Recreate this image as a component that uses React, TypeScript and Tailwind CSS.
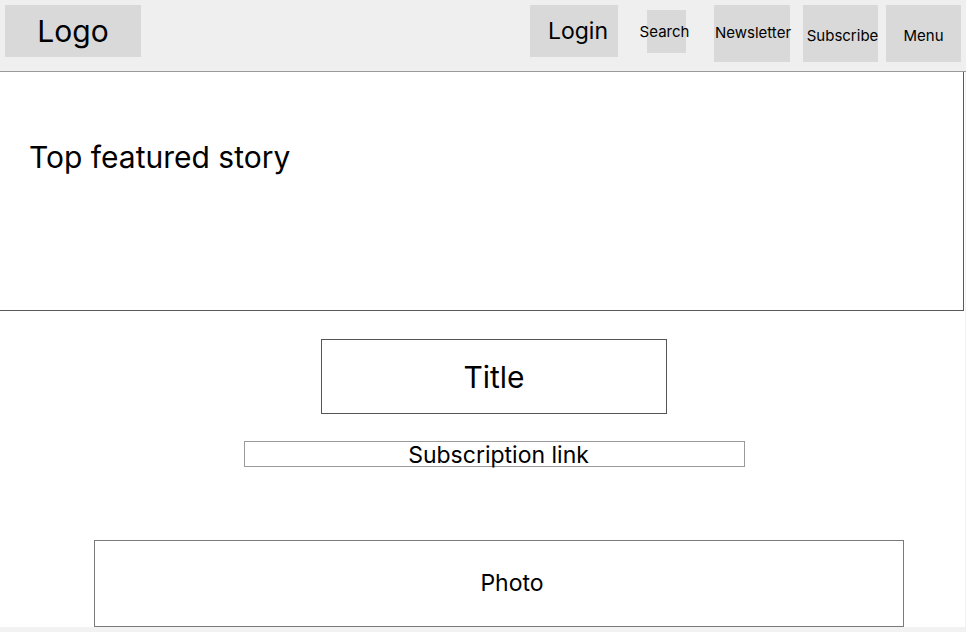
import React from "react";

export default function App() {
  return (
    <div className="w-[966px] h-[632px] bg-[#f2f2f2] overflow-hidden text-black" style={{ fontFamily: "Inter, 'Noto Sans', sans-serif" }}>
      <header className="h-[72px] bg-[#efefef] border-b border-[#9a9a9a] flex items-start px-[5px]">
        <div className="mt-[5px] w-[136px] h-[52px] bg-[#d9d9d9] flex items-center justify-center text-[30px] leading-none">Logo</div>
        <div className="ml-auto flex items-start">
          <div className="mt-[5px] w-[88px] h-[52px] bg-[#d9d9d9] flex items-center justify-center text-[23px] leading-none">
            <span className="ml-[8px]">Login</span>
          </div>
          <div className="ml-[29px] mt-[10px] w-[39px] h-[43px] bg-[#d9d9d9] flex items-center justify-center text-[15px] leading-none whitespace-nowrap">
            <span className="-ml-[4px]">Search</span>
          </div>
          <div className="ml-[28px] mt-[5px] w-[76px] h-[57px] bg-[#d9d9d9] flex items-center justify-center text-[15px] leading-none whitespace-nowrap">
            <span className="ml-[2px] -mt-[3px]">Newsletter</span>
          </div>
          <div className="ml-[13px] mt-[5px] w-[75px] h-[57px] bg-[#d9d9d9] flex items-center justify-center text-[15px] leading-none whitespace-nowrap">
            <span className="ml-[4px] mt-[3px]">Subscribe</span>
          </div>
          <div className="ml-[8px] mt-[5px] w-[75px] h-[57px] bg-[#d9d9d9] flex items-center justify-center text-[15px] leading-none whitespace-nowrap">
            <span className="mt-[3px]">Menu</span>
          </div>
        </div>
      </header>
      <main className="w-[965px] h-[555px] bg-white flex flex-col items-start">
        <section className="w-[964px] h-[239px] border-r border-b border-[#5a5a5a] flex items-start">
          <div className="ml-[29px] mt-[70px] text-[30px] leading-none">Top featured story</div>
        </section>
        <div className="ml-[321px] mt-[28px] w-[346px] h-[75px] border border-[#555] flex items-center justify-center text-[30px] leading-none">
          Title
        </div>
        <div className="ml-[244px] mt-[27px] w-[501px] h-[26px] border border-[#9a9a9a] flex items-center justify-center text-[23px] leading-none">
          <span className="ml-[8px] mt-[2px]">Subscription link</span>
        </div>
        <div className="ml-[94px] mt-[73px] w-[810px] h-[87px] border border-[#7a7a7a] flex items-center justify-center text-[23px] leading-none">
          <span className="ml-[26px]">Photo</span>
        </div>
      </main>
    </div>
  );
}
